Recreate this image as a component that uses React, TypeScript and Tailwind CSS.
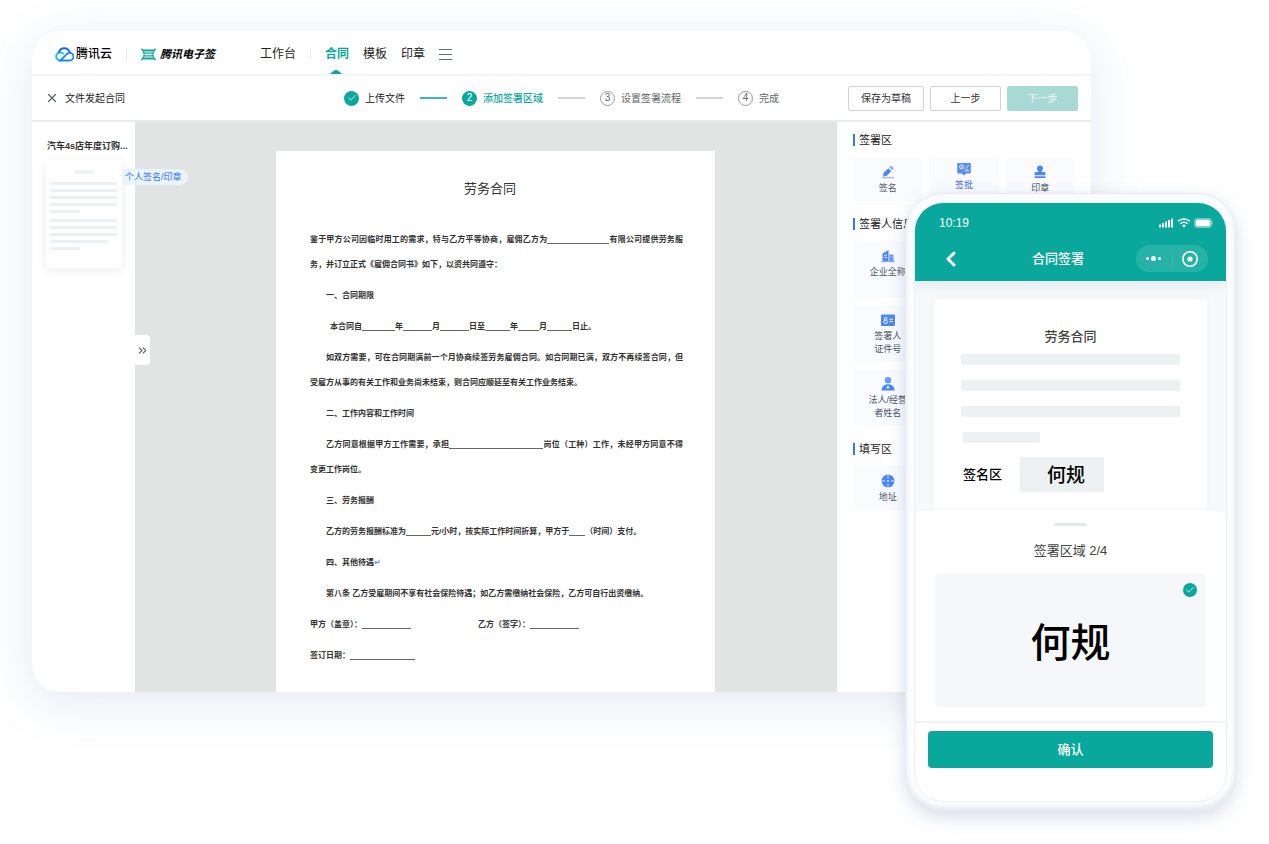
import type { ReactNode } from 'react';
import clsx from 'clsx';
import { Check, ChevronLeft, ChevronsRight, X } from 'lucide-react';

type Step = { no: number; label: string; state: 'done' | 'active' | 'todo' };

const STEPS: Step[] = [
  { no: 1, label: '上传文件', state: 'done' },
  { no: 2, label: '添加签署区域', state: 'active' },
  { no: 3, label: '设置签署流程', state: 'todo' },
  { no: 4, label: '完成', state: 'todo' },
];

const THUMB_LINES = [
  'w-[67px]',
  'w-[67px]',
  'w-[67px]',
  'w-[67px]',
  'w-[30px]',
  'w-[67px] mt-[2px]',
  'w-[67px]',
  'w-[67px]',
  'w-[58px]',
  'w-[30px]',
];

function CloudLogo() {
  return (
    <svg viewBox="0 0 38 30" className="h-[15px] w-[19px]" fill="none" strokeWidth="3.6">
      <path d="M12 27h-1.500a8 8 0 1 1 1.500-15.800c2.200.4 3.800 1.500 5.300 3" stroke="#10c3ee" />
      <path d="M7.500 11.500C9 5.500 13.500 2.500 18.500 2.500c5.200 0 9.200 3 10.800 8.200" stroke="#1466f0" />
      <path d="M11 27 22.500 15.200c2-2 4-3.700 6.700-3.700a7.700 7.700 0 0 1 0 15.500z" stroke="#1a8cfa" />
    </svg>
  );
}

function SignLogo() {
  return (
    <svg viewBox="0 0 30 26" className="h-[13px] w-[15px]" fill="#0ba99c">
      <path d="M.5.500C2.500 2.200 4 3 6 3h18c2 0 3.500-.8 5.500-2.500v3.700C27.500 6.300 26 7 24 7H6C4 7 2.500 6.300.5 4.200z" />
      <path d="M.5 25.500C2.500 23.800 4 23 6 23h18c2 0 3.500.8 5.500 2.500v-3.700C27.500 19.700 26 19 24 19H6c-2 0-3.500.7-5.500 2.800z" />
      <path d="M4 9.200h22v2.300H4zM4 14.600h22v2.300H4z" />
      <path d="M3 6c3.500 4 3.500 10 0 14h2.500c2.500-4 2.500-10 0-14zM27 6c-3.500 4-3.500 10 0 14h-2.500c-2.500-4-2.500-10 0-14z" />
    </svg>
  );
}

function PenIcon() {
  return (
    <svg viewBox="0 0 16 16" className="size-4" fill="#4f86f7">
      <path d="M3.500 9 8.300 4.200l3 3L6.500 12l-3.500.5z" />
      <path d="m9.200 3.300 1-1a1.200 1.200 0 0 1 1.700 0l1.300 1.300a1.200 1.200 0 0 1 0 1.700l-1 1z" opacity=".65" />
      <path d="M2 13.300h12v1H2z" opacity=".7" />
    </svg>
  );
}

function ApproveIcon() {
  return (
    <svg viewBox="0 0 16 16" className="size-4">
      <path d="M2 2h12a.8.8 0 0 1 .8.8v9a.8.800 0 0 1-.8.8h-3.800L8 14.500l-2.200-1.900H2a.8.8 0 0 1-.8-.8v-9A.8.8 0 0 1 2 2z" fill="#5a8cf7" />
      <circle cx="5.500" cy="5.800" r="2" fill="none" stroke="#fff" strokeWidth=".8" />
      <path d="m4.600 5.800.7.700 1.200-1.300M12.800 4 8.500 8.300M8.500 9.800h4.300M10.500 8l2 1.800" fill="none" stroke="#fff" strokeWidth=".8" />
    </svg>
  );
}

function StampIcon() {
  return (
    <svg viewBox="0 0 16 16" className="size-4" fill="#4f86f7">
      <path d="M8 1.500a3 3 0 0 1 3 3c0 1.500-1.300 2.300-1.300 3.600h2.800a.9.9 0 0 1 .9.900v2.200H2.600V9a.9.9 0 0 1 .9-.9h2.800C6.300 6.800 5 6 5 4.500a3 3 0 0 1 3-3z" />
      <path d="M2.600 12.300h10.800v1.700H2.600z" />
    </svg>
  );
}

function CompanyIcon() {
  return (
    <svg viewBox="0 0 16 16" className="size-4">
      <path d="M2.500 13V5.500L8.500 2v11z" fill="#4f86f7" />
      <path d="M9.300 13V6.500h3.200a1 1 0 0 1 1 1V13z" fill="#6496f9" />
      <path d="M1 13h14v1.200H1z" fill="#8fb2fb" />
      <path d="M4.300 7.200h2.500M4.300 9.500h2.500M11 9.200h1.200" stroke="#fff" strokeWidth="1" />
    </svg>
  );
}

function IdCardIcon() {
  return (
    <svg viewBox="0 0 16 16" className="size-4">
      <rect x="1" y="2.500" width="14" height="11.500" rx="1" fill="#4f86f7" />
      <circle cx="5.600" cy="6.600" r="1.400" fill="none" stroke="#fff" strokeWidth=".9" />
      <circle cx="5.600" cy="9.800" r="1.800" fill="none" stroke="#fff" strokeWidth=".9" />
      <path d="M9.300 7.200h3.700M9.300 9.500h3.700" stroke="#fff" strokeWidth=".9" />
    </svg>
  );
}

function PersonIcon() {
  return (
    <svg viewBox="0 0 16 16" className="size-4">
      <circle cx="8" cy="4.300" r="3.200" fill="#6f9bf9" />
      <path d="M1.500 14.500c0-4 2.500-6.300 6.500-6.300s6.500 2.300 6.500 6.300z" fill="#4f86f7" />
      <path d="m8 9.500 1.600 1.700L8 12.900l-1.600-1.700z" fill="#dfe9ff" />
    </svg>
  );
}

function AddressIcon() {
  return (
    <svg viewBox="0 0 16 16" className="size-4">
      <circle cx="8" cy="8" r="6.500" fill="#4f86f7" />
      <path d="M8 1.500v3.700M8 10.800v3.700M1.500 8h3.700M10.800 8h3.700" stroke="#e8f0ff" strokeWidth=".9" />
      <circle cx="8" cy="8" r=".9" fill="#e8f0ff" />
    </svg>
  );
}

function StepMark({ step }: { step: Step }) {
  if (step.state === 'done') {
    return (
      <span className="flex size-[15px] items-center justify-center rounded-full bg-[#0aa89c] text-white">
        <Check size={10} strokeWidth={2} />
      </span>
    );
  }
  return (
    <span
      className={clsx(
        'flex size-[15px] items-center justify-center rounded-full text-[10px] leading-none',
        step.state === 'active' ? 'bg-[#0aa89c] text-white' : 'border border-[#999] text-[#666]',
      )}
    >
      {step.no}
    </span>
  );
}

function PanelSection({ title, children }: { title: string; children: ReactNode }) {
  return (
    <section>
      <h2 className="mb-[10px] flex items-center gap-1 text-[11px] leading-[14px] text-[#222]">
        <span className="h-3 w-[2px] bg-[#2b7bf3]" />
        {title}
      </h2>
      <div className="grid grid-cols-3 gap-[7px]">{children}</div>
    </section>
  );
}

function Tile({ icon, lines, tall, active }: { icon: ReactNode; lines: string[]; tall?: boolean; active?: boolean }) {
  return (
    <button
      className={clsx(
        'flex flex-col items-center gap-[2px] rounded bg-[#f9fbff] text-[9px] leading-[13px]',
        tall ? 'h-[57px]' : 'h-11',
        active ? 'pt-1 text-[#3f68cf]' : 'pt-[7px] text-[#4b5566]',
      )}
    >
      {icon}
      <span className="whitespace-nowrap">
        {lines.map((line) => (
          <span key={line} className="block">
            {line}
          </span>
        ))}
      </span>
    </button>
  );
}

function Blank({ className }: { className: string }) {
  return <span className={clsx('inline-block h-2 border-b border-[#666] align-middle', className)} />;
}

function TopBar() {
  return (
    <header className="flex h-[45px] items-center border-b-2 border-[#f2f5f5] pt-[3px] pl-[23px] text-[12px] text-[#222]">
      <a href="#" className="flex items-center gap-[2px] font-medium text-black">
        <CloudLogo />
        腾讯云
      </a>
      <span className="mx-[14px] h-[13px] w-px bg-[#e8ebeb]" />
      <a href="#" className="flex items-center gap-1 text-[11px] font-bold text-black italic">
        <SignLogo />
        腾讯电子签
      </a>
      <nav className="ml-[45px] flex items-center gap-[14px] self-stretch">
        <a href="#">工作台</a>
        <span className="h-[10px] w-px bg-[#e8ebeb]" />
        <a href="#" className="relative flex items-center self-stretch font-bold text-[#0aa89c]">
          合同
          <svg viewBox="0 0 14 4" className="absolute bottom-0 left-1 h-1 w-[14px]" fill="#0aa89c">
            <path d="M0 4C3 3.500 4 0 7 0s4 3.500 7 4z" />
          </svg>
        </a>
        <a href="#">模板</a>
        <a href="#">印章</a>
        <button aria-label="菜单">
          <svg viewBox="0 0 13 13" className="size-[13px]" stroke="#5f6f6a">
            <path d="M0 1.500h13M0 6.500h13M0 11.500h13" />
          </svg>
        </button>
      </nav>
    </header>
  );
}

function StepBar() {
  return (
    <div className="grid h-[46px] grid-cols-[1fr_auto_1fr] items-center border-b-2 border-[#e8ecec] px-[13px] text-[10px] whitespace-nowrap">
      <div className="flex items-center gap-[6px] text-[#222]">
        <button aria-label="关闭">
          <X size={14} strokeWidth={2} className="text-[#53635e]" />
        </button>
        文件发起合同
      </div>
      <ol className="flex items-center gap-[15px]">
        {STEPS.map((step) => (
          <li key={step.no} className="flex items-center gap-[15px]">
            {step.no > 1 && (
              <span className={clsx('h-[2px] w-[27px]', step.state === 'active' ? 'bg-[#3dbab0]' : 'bg-[#d4d4d4]')} />
            )}
            <span
              className={clsx(
                'flex items-center gap-[6px]',
                step.state === 'done' && 'text-[#222]',
                step.state === 'active' && 'font-medium text-[#0aa89c]',
                step.state === 'todo' && 'text-[#666]',
              )}
            >
              <StepMark step={step} />
              {step.label}
            </span>
          </li>
        ))}
      </ol>
      <div className="flex justify-end gap-[6px]">
        <button className="h-[25px] w-[76px] rounded-[2px] border border-[#cfd3d3] text-[#333]">保存为草稿</button>
        <button className="h-[25px] w-[71px] rounded-[2px] border border-[#cfd3d3] text-[#333]">上一步</button>
        <button className="h-[25px] w-[71px] rounded-[2px] bg-[#a9d9d4] text-white/80">下一步</button>
      </div>
    </div>
  );
}

function FileSidebar() {
  return (
    <aside className="relative w-[103px] shrink-0 pt-[17px] pl-[14px]">
      <p className="pl-px text-[9px] leading-[14px] font-bold whitespace-nowrap text-[#333]">汽车4s店年度订购...</p>
      <div className="mt-[7px] flex h-[108px] w-[76px] flex-col gap-1 rounded bg-white px-1 pt-[10px] shadow-[0_2px_12px_rgba(0,0,0,0.08)]">
        <span className="mb-1 h-1 w-[19px] shrink-0 self-center bg-[#edf2f3]" />
        {THUMB_LINES.map((w, i) => (
          <span key={i} className={clsx('h-[3px] shrink-0 bg-[#ebf1f3]', w)} />
        ))}
      </div>
      <span className="absolute top-[47px] left-[90px] z-10 rounded-r-full bg-[#ebf3ff] pr-[6px] pl-[3px] text-[9px] leading-4 whitespace-nowrap text-[#2b7bf3]">
        个人签名/印章
      </span>
      <button
        aria-label="展开"
        className="absolute top-[213px] left-full z-10 flex h-[30px] w-[15px] items-center justify-center rounded-r bg-white text-[#53635e]"
      >
        <ChevronsRight size={13} strokeWidth={2} />
      </button>
    </aside>
  );
}

function ContractDocument() {
  return (
    <article className="flex-1 bg-white pt-[28px] pb-[24px] pl-[34px]">
      <h1 className="w-[360px] text-center text-[13px] leading-5 text-[#333]">劳务合同</h1>
      <div className="mt-[28px] w-[373px] space-y-[6px] text-justify text-[8px] leading-[25px] font-bold text-[#333]">
        <p>
          鉴于甲方公司因临时用工的需求，特与乙方平等协商，雇佣乙方为
          <Blank className="w-[62px]" />
          有限公司提供劳务服务，并订立正式《雇佣合同书》如下，以资共同遵守：
        </p>
        <p className="indent-4">一、合同期限</p>
        <p className="indent-5">
          本合同自
          <Blank className="w-[33px]" />年<Blank className="w-[29px]" />月<Blank className="w-[29px]" />
          日至
          <Blank className="w-[25px]" />年<Blank className="w-[21px]" />月<Blank className="w-[25px]" />
          日止。
        </p>
        <p className="indent-4">
          如双方需要，可在合同期满前一个月协商续签劳务雇佣合同。如合同期已满，双方不再续签合同，但受雇方从事的有关工作和业务尚未结束，则合同应顺延至有关工作业务结束。
        </p>
        <p className="indent-4">二、工作内容和工作时间</p>
        <p className="indent-4">
          乙方同意根据甲方工作需要，承担
          <Blank className="w-[94px]" />
          岗位（工种）工作，未经甲方同意不得变更工作岗位。
        </p>
        <p className="indent-4">三、劳务报酬</p>
        <p className="indent-4">
          乙方的劳务报酬标准为
          <Blank className="w-[25px]" />
          元/小时，按实际工作时间折算，甲方于
          <Blank className="w-[16px]" />
          （时间）支付。
        </p>
        <p className="indent-4">
          四、其他待遇<span className="text-[#4d9bf8]">↵</span>
        </p>
        <p className="indent-4">第八条 乙方受雇期间不享有社会保险待遇；如乙方需缴纳社会保险，乙方可自行出资缴纳。</p>
        <p className="flex">
          <span className="w-[168px]">
            甲方（盖章）：
            <Blank className="w-[49px]" />
          </span>
          <span>
            乙方（签字）：
            <Blank className="w-[49px]" />
          </span>
        </p>
        <p>
          签订日期：
          <Blank className="w-[65px]" />
        </p>
      </div>
    </article>
  );
}

function FieldPanel() {
  return (
    <aside className="w-[254px] shrink-0 space-y-4 px-4 pt-[11px]">
      <PanelSection title="签署区">
        <Tile icon={<PenIcon />} lines={['签名']} />
        <Tile icon={<ApproveIcon />} lines={['签批']} active />
        <Tile icon={<StampIcon />} lines={['印章']} />
      </PanelSection>
      <PanelSection title="签署人信息">
        <div className="space-y-[7px] [&>button]:w-full">
          <Tile icon={<CompanyIcon />} lines={['企业全称']} tall />
          <Tile icon={<IdCardIcon />} lines={['签署人', '证件号']} tall />
          <Tile icon={<PersonIcon />} lines={['法人/经营', '者姓名']} tall />
        </div>
      </PanelSection>
      <PanelSection title="填写区">
        <Tile icon={<AddressIcon />} lines={['地址']} />
      </PanelSection>
    </aside>
  );
}

function PhoneHeader() {
  return (
    <header className="h-[78px] bg-[#0aa89c] pt-3 pr-[18px] pl-6 text-white shadow-[0_4px_14px_rgba(0,0,0,0.08)]">
      <div className="-mr-[5px] flex h-4 items-center justify-between text-[12px]">
        <span>10:19</span>
        <svg viewBox="0 0 54 12" className="h-3 w-[54px]" fill="#fff">
          <rect x="0" y="7.500" width="2" height="3" rx=".5" />
          <rect x="3" y="6" width="2" height="4.500" rx=".5" />
          <rect x="6" y="4.500" width="2" height="6" rx=".5" />
          <rect x="9" y="3" width="2" height="7.500" rx=".5" />
          <rect x="12" y="1.500" width="2" height="9" rx=".5" />
          <g fill="none" stroke="#fff" strokeWidth="1.500">
            <path d="M19 4.300c3.400-3.200 8.600-3.200 12 0" />
            <path d="M21.200 6.700c2.200-2 5.400-2 7.600 0" />
          </g>
          <path d="m25 10.500-1.900-2a2.800 2.800 0 0 1 3.800 0z" />
          <rect x="35.500" y="1.500" width="17" height="9" rx="2.500" fill="none" stroke="#fff" strokeOpacity=".4" />
          <rect x="36.500" y="2.500" width="15" height="7" rx="1.500" />
          <path d="M53.300 4.500v3a1.500 1.500 0 0 0 0-3z" opacity=".5" />
        </svg>
      </div>
      <div className="mt-[14px] flex items-center">
        <button aria-label="返回">
          <ChevronLeft size={24} strokeWidth={3} />
        </button>
        <h2 className="ml-[69px] text-[13px] font-medium">合同签署</h2>
        <div className="ml-auto flex h-[27px] w-[72px] items-center rounded-full bg-white/12">
          <button aria-label="更多" className="flex flex-1 items-center justify-center gap-[2px]">
            <span className="size-[3px] rounded-full bg-white" />
            <span className="size-[5px] rounded-full bg-white" />
            <span className="size-[3px] rounded-full bg-white" />
          </button>
          <span className="h-4 w-px bg-white/10" />
          <button aria-label="关闭" className="flex flex-1 items-center justify-center">
            <svg viewBox="0 0 18 18" className="size-[18px]">
              <circle cx="9" cy="9" r="7.200" fill="none" stroke="#fff" strokeWidth="1.600" />
              <circle cx="9" cy="9" r="2.600" fill="#fff" />
            </svg>
          </button>
        </div>
      </div>
    </header>
  );
}

function Phone() {
  return (
    <div className="absolute top-[193px] right-[33px] z-20 w-[331px] rounded-[38px] border border-[#e6eaf2] bg-[#fcfdfe] p-[9px] shadow-[0_6px_18px_rgba(70,100,150,0.22),inset_0_-3px_5px_rgba(100,120,150,0.16)]">
      <div className="overflow-hidden rounded-[28px] bg-[#f7fafc] shadow-[0_0_0_1px_#eceff6]">
        <PhoneHeader />
        <div className="mx-[19px] mt-[18px] h-[211px] rounded-t bg-white px-[27px] pt-[29px] shadow-[0_0_10px_rgba(0,0,0,0.03)]">
          <h3 className="text-center text-[13px] leading-[18px] font-medium text-[#444]">劳务合同</h3>
          <div className="mt-[8px] space-y-[15px]">
            <div className="h-[11px] rounded-[1px] bg-[#edf1f2]" />
            <div className="h-[11px] rounded-[1px] bg-[#edf1f2]" />
            <div className="h-[11px] rounded-[1px] bg-[#edf1f2]" />
            <div className="ml-[2px] h-[11px] w-[77px] rounded-[1px] bg-[#edf1f2]" />
          </div>
          <div className="mt-[14px] flex items-center gap-[18px] pl-[2px]">
            <span className="text-[13px] font-medium text-black">签名区</span>
            <span className="flex h-[35px] w-[84px] items-center justify-center rounded-[1px] bg-[#edf1f2] pt-[3px] pl-2 text-[19px] font-medium text-black">
              何规
            </span>
          </div>
        </div>

        <div className="relative rounded-t-lg bg-white shadow-[0_-1px_3px_rgba(0,0,0,0.04)]">
          <div className="px-5 pt-[13px] pb-[14px]">
            <div className="mx-auto h-[3px] w-[33px] rounded-full bg-[#e2ebe9]" />
            <p className="mt-4 text-center text-[13px] leading-[18px] text-[#444]">签署区域 2/4</p>
            <div className="relative mt-[14px] flex h-[133px] items-center justify-center rounded bg-[#f5f7fb] pt-1 text-[40px] font-medium text-black">
              何规
              <span className="absolute top-[9px] right-[9px] flex size-[14px] items-center justify-center rounded-full bg-[#0aa89c] text-white">
                <Check size={10} strokeWidth={2} />
              </span>
            </div>
          </div>
          <div className="border-t-2 border-[#f0f2f3] px-[13px] pt-2 pb-[33px]">
            <button className="h-[37px] w-full rounded bg-[#0aa89c] text-[13px] font-medium text-white">确认</button>
          </div>
        </div>
      </div>
    </div>
  );
}

export default function App() {
  return (
    <div className="relative min-h-screen overflow-hidden bg-white pt-[31px] pr-[178px] pb-[60px] pl-8 font-['Liberation_Sans','Noto_Sans_CJK_SC',sans-serif]">
      <main className="overflow-hidden rounded-[28px] bg-white shadow-[0_10px_50px_rgba(70,110,170,0.15)]">
        <TopBar />
        <StepBar />
        <div className="flex">
          <FileSidebar />
          <div className="flex flex-1 bg-[#e1e4e3] pt-[29px] pr-[122px] pl-[141px]">
            <ContractDocument />
          </div>
          <FieldPanel />
        </div>
      </main>
      <Phone />
    </div>
  );
}
